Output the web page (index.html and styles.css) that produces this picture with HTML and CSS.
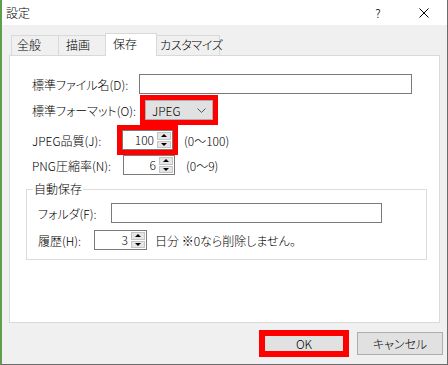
FILE: index.html
```html
<!DOCTYPE html>
<html lang="ja">
<head>
  <meta charset="UTF-8">
  <title>設定</title>
  <link rel="stylesheet" href="styles.css">
</head>
<body>
  <div class="window">
    <div class="titlebar">
      <span class="title">設定</span>
      <span class="tbtn">?</span>
      <span class="tbtn">
        <svg width="10" height="10" viewBox="0 0 10 10"><path d="M0.5 0.5L9.5 9.5M9.5 0.5L0.5 9.5" stroke="#000" stroke-width="1" fill="none"/></svg>
      </span>
    </div>

    <div class="tabs">
      <span class="tab t1">全般</span>
      <span class="tab t2">描画</span>
      <span class="tab t3 active">保存</span>
      <span class="tab t4">カスタマイズ</span>
    </div>

    <div class="panel">
      <div class="row r1">
        <span class="label">標準ファイル名(D):</span>
        <span class="field file"></span>
      </div>
      <div class="row r2">
        <span class="label">標準フォーマット(O):</span>
        <span class="combo mark">
          <span class="combo-text">JPEG</span>
          <svg width="9" height="5" viewBox="0 0 9 5"><path d="M0.5 0.5L4.5 4.5L8.5 0.5" stroke="#555" stroke-width="1" fill="none"/></svg>
        </span>
      </div>
      <div class="row r3">
        <span class="label">JPEG品質(J):</span>
        <span class="field num q mark">
          <span class="value">100</span>
          <span class="spin"><span class="up"></span><span class="down"></span></span>
        </span>
        <span class="hint">(0～100)</span>
      </div>
      <div class="row r4">
        <span class="label">PNG圧縮率(N):</span>
        <span class="field num png">
          <span class="value">6</span>
          <span class="spin"><span class="up"></span><span class="down"></span></span>
        </span>
        <span class="hint">(0～9)</span>
      </div>

      <fieldset class="group">
        <legend>自動保存</legend>
        <div class="row g1">
          <span class="label">フォルダ(F):</span>
          <span class="field folder"></span>
        </div>
        <div class="row g2">
          <span class="label">履歴(H):</span>
          <span class="field num hist">
            <span class="value">3</span>
            <span class="spin"><span class="up"></span><span class="down"></span></span>
          </span>
          <span class="note">日分 ※0なら削除しません。</span>
        </div>
      </fieldset>
    </div>

    <div class="buttons">
      <span class="btn ok">OK</span>
      <span class="btn">キャンセル</span>
    </div>
  </div>
</body>
</html>
```

FILE: styles.css
```css
body {
  margin: 0;
  font-family: "Noto Sans CJK JP", "Noto Sans", sans-serif;
  font-size: 12px;
  font-weight: 300;
  font-feature-settings: "palt";
  color: #000;
}
.window {
  width: 448px;
  height: 365px;
  box-sizing: border-box;
  border-left: 2px solid #5f9e4c;
  border-right: 1px solid #6b6b6b;
  border-bottom: 1px solid #6b6b6b;
  background-color: #f0f0f0;
}

/* title bar */
.titlebar {
  height: 25px;
  background-color: white;
  display: flex;
  align-items: center;
}
.title {
  flex: 1;
  padding-left: 4px;
}
.tbtn {
  width: 46px;
  height: 25px;
  display: flex;
  align-items: center;
  justify-content: center;
}

/* tabs */
.tabs {
  display: flex;
  align-items: flex-end;
  height: 22px;
  margin: 8px 0 0 9px;
  position: relative;
  z-index: 1;
}
.tab {
  box-sizing: border-box;
  height: 20px;
  line-height: 18px;
  white-space: nowrap;
  border: 1px solid #d9d9d9;
  border-bottom: none;
  margin-left: -1px;
  background-color: #f0f0f0;
}
.t1 { width: 48px; margin-left: 0; padding-left: 5px; }
.t2 { width: 48px; padding-left: 7px; }
.t3 { width: 52px; padding-left: 7px; }
.t4 { width: 64px; padding-left: 3px; letter-spacing: -0.3px; }
.tab.active {
  height: 23px;
  line-height: 19px;
  margin-bottom: -1px;
  background-color: white;
}

/* panel */
.panel {
  box-sizing: border-box;
  width: 431px;
  height: 268px;
  margin-left: 7px;
  padding-top: 18px;
  border: 1px solid #d9d9d9;
  background-color: white;
}
.row {
  display: flex;
  align-items: center;
  height: 20px;
  padding-left: 22px;
  white-space: nowrap;
}
.label { flex: none; }
.r1 .label { width: 107px; }
.r2 .label { width: 113px; }
.r3 .label { width: 90px; }
.r4 .label { width: 91px; }
.r2 { margin-top: 6px; }
.r3 { margin-top: 10px; }
.r4 { margin-top: 5px; }

.field {
  box-sizing: border-box;
  height: 20px;
  border: 1px solid #7a7a7a;
  background-color: white;
  display: flex;
  align-items: center;
}
.file { width: 273px; }
.folder { width: 271px; }
.num { justify-content: flex-end; }
.q { width: 51px; }
.png { width: 52px; }
.hist { width: 53px; }
.value {
  padding-right: 3px;
  line-height: 16px;
}
.spin {
  width: 14px;
  height: 16px;
  margin-right: 1px;
  display: flex;
  flex-direction: column;
  gap: 1px;
}
.spin span {
  flex: 1;
  box-sizing: border-box;
  border: 1px solid #c4c4c4;
  background-color: #e6e6e6;
  display: flex;
  align-items: center;
  justify-content: center;
}
.spin .up::before,
.spin .down::before {
  content: "";
  border-left: 3px solid transparent;
  border-right: 3px solid transparent;
}
.spin .up::before { border-bottom: 3px solid #000; }
.spin .down::before { border-top: 3px solid #000; }

.hint { margin-left: 11px; }
.note { margin-left: 8px; }

.combo {
  box-sizing: border-box;
  width: 68px;
  height: 20px;
  border: 1px solid #adadad;
  background-color: #e1e1e1;
  display: flex;
  align-items: center;
  justify-content: space-between;
  padding: 0 6px 0 6px;
}

/* red annotation boxes */
.mark {
  outline: 5px solid #ff0000;
}

/* group box */
.group {
  box-sizing: border-box;
  height: 79px;
  margin: 6px 12px 0 16px;
  padding: 6px 0 0 0;
  border: 1px solid #dcdcdc;
}
.group legend {
  margin-left: 6px;
  padding: 0 1px;
  line-height: 16px;
}
.group .row { padding-left: 11px; }
.g1 .label { width: 73px; }
.g2 .label { width: 56px; }
.g2 { margin-top: 7px; }

/* dialog buttons */
.buttons {
  display: flex;
  justify-content: flex-end;
  gap: 10px;
  margin-top: 9px;
  padding-right: 4px;
}
.btn {
  box-sizing: border-box;
  width: 86px;
  height: 23px;
  border: 1px solid #adadad;
  background-color: #e1e1e1;
  display: flex;
  align-items: center;
  justify-content: center;
}
.btn.ok {
  border-color: #0078d7;
  outline: 6px solid #ff0000;
  outline-offset: -4px;
}
```
